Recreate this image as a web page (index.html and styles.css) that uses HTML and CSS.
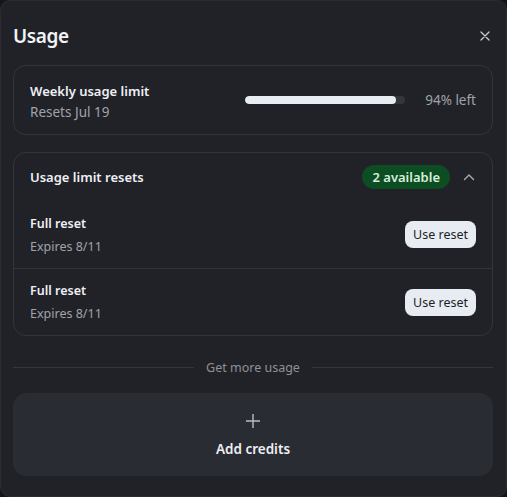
FILE: index.html
```html
<!DOCTYPE html>
<html>
<head>
<meta charset="utf-8">
<link rel="stylesheet" href="styles.css">
</head>
<body>
<div class="dialog">
  <div class="header">
    <h1 class="title">Usage</h1>
    <svg class="close" width="10" height="10" viewBox="0 0 10 10"><path d="M1 1L9 9M9 1L1 9" stroke="#c9ccd2" stroke-width="1.3" stroke-linecap="round"/></svg>
  </div>

  <div class="card weekly">
    <div class="info">
      <div class="label">Weekly usage limit</div>
      <div class="sub">Resets Jul 19</div>
    </div>
    <div class="meter">
      <div class="track"><div class="fill" style="width:94%"></div></div>
      <span class="pct">94% left</span>
    </div>
  </div>

  <div class="card resets">
    <div class="resets-head">
      <div class="label">Usage limit resets</div>
      <div class="head-right">
        <span class="badge">2 available</span>
        <svg class="chev" width="12" height="8" viewBox="0 0 12 8"><path d="M1.5 6.5L6 2L10.5 6.5" fill="none" stroke="#a9acb3" stroke-width="1.4" stroke-linecap="round" stroke-linejoin="round"/></svg>
      </div>
    </div>
    <div class="row first">
      <div class="info">
        <div class="label small">Full reset</div>
        <div class="sub small">Expires 8/11</div>
      </div>
      <button class="btn">Use reset</button>
    </div>
    <div class="row">
      <div class="info">
        <div class="label small">Full reset</div>
        <div class="sub small">Expires 8/11</div>
      </div>
      <button class="btn">Use reset</button>
    </div>
  </div>

  <div class="sep"><span>Get more usage</span></div>

  <div class="add">
    <svg width="16" height="16" viewBox="0 0 16 16"><path d="M8 1V15M1 8H15" stroke="#b9bcc2" stroke-width="1.4"/></svg>
    <span>Add credits</span>
  </div>
</div>
</body>
</html>
```
FILE: styles.css
```css
* { box-sizing: border-box; }
html, body { margin: 0; height: 100%; }
body {
  background: #141519;
  font-family: "Noto Sans", "Liberation Sans", sans-serif;
  color: #eceef2;
}
.dialog {
  height: 497px;
  width: 507px;
  background: #202228;
  border: 1px solid #2a2c32;
  border-radius: 10px;
  padding: 0 13px 0 12px;
  display: flex;
  flex-direction: column;
}
.header {
  display: flex;
  align-items: center;
  justify-content: space-between;
  height: 64px;
  padding-top: 5px;
}
.title {
  margin: 0;
  font-size: 19px;
  font-weight: 600;
  color: #f1f3f6;
  letter-spacing: -0.4px;
}
.close { margin-right: 3px; margin-top: 1px; }
.card {
  border: 1px solid #33353b;
  border-radius: 13px;
}
.weekly {
  height: 70px;
  display: flex;
  align-items: center;
  justify-content: space-between;
  padding: 0 16px 0 16px;
}
.weekly .info { padding-top: 2px; }
.label {
  font-size: 13px;
  font-weight: 600;
  color: #eef0f4;
  line-height: 21px;
}
.sub {
  font-size: 13.5px;
  color: #a0a3aa;
  line-height: 20px;
}
.meter {
  display: flex;
  align-items: center;
  gap: 20px;
}
.track {
  width: 160px;
  height: 8px;
  border-radius: 4px;
  background: #34363c;
  overflow: hidden;
}
.fill {
  height: 100%;
  background: #e8edf4;
  border-radius: 4px;
}
.pct {
  font-size: 13.5px;
  color: #a0a3aa;
}
.resets {
  margin-top: 17px;
  height: 184px;
  display: flex;
  flex-direction: column;
}
.resets-head {
  display: flex;
  align-items: center;
  justify-content: space-between;
  padding: 0 17px 0 16px;
  height: 48px;
}
.head-right {
  display: flex;
  align-items: center;
  gap: 13px;
}
.badge {
  background: #0c4d23;
  color: #d5efd9;
  font-size: 13px;
  font-weight: 600;
  height: 24px;
  line-height: 24px;
  padding: 0 10px;
  border-radius: 12px;
}
.chev { display: block; }
.row {
  flex: 1;
  display: flex;
  align-items: center;
  justify-content: space-between;
  padding: 0 16px;
}
.row.first { border-bottom: 1px solid #33353b; }
.row .info { padding-top: 2px; }
.small { font-size: 12.5px; }
.label.small { line-height: 22px; }
.sub.small { line-height: 22px; margin-top: 1px; }
.btn {
  font-family: inherit;
  font-size: 12.5px;
  color: #1d1f24;
  background: #e7ecf3;
  border: none;
  border-radius: 8px;
  height: 27px;
  padding: 0 8px;
  margin-top: 1px;
}
.sep {
  display: flex;
  align-items: center;
  gap: 12px;
  margin-top: 22px;
  height: 18px;
  font-size: 12.5px;
  color: #8e9198;
}
.sep::before, .sep::after {
  content: "";
  flex: 1;
  height: 1px;
  background: #34363c;
}
.add {
  margin-top: 17px;
  height: 83px;
  background: #2a2c33;
  border-radius: 14px;
  display: flex;
  flex-direction: column;
  align-items: center;
  justify-content: center;
  gap: 11px;
  padding-top: 1px;
  font-size: 13.5px;
  font-weight: 600;
  color: #eef0f4;
}
.add svg { display: block; }
```
